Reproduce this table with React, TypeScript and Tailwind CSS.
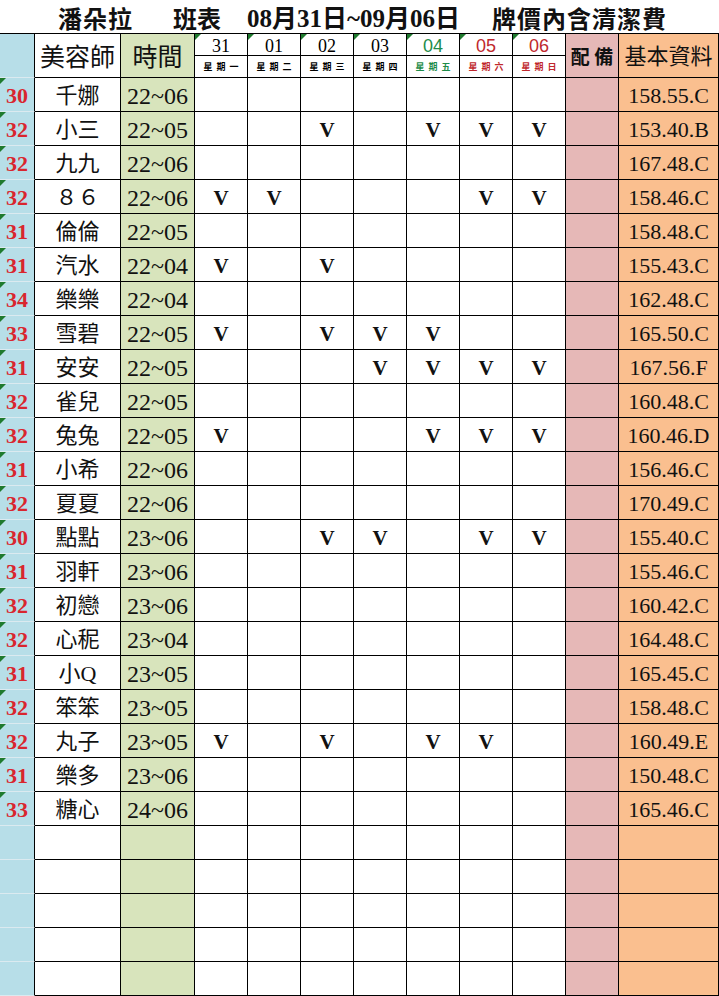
import React from "react";

type Row = {
  no: string;
  name: string;
  time: string;
  marks: number[];
  info: string;
};

const rows: Row[] = [
  { no: "30", name: "千娜", time: "22~06", marks: [], info: "158.55.C" },
  { no: "32", name: "小三", time: "22~05", marks: [2, 4, 5, 6], info: "153.40.B" },
  { no: "32", name: "九九", time: "22~06", marks: [], info: "167.48.C" },
  { no: "32", name: "８６", time: "22~06", marks: [0, 1, 5, 6], info: "158.46.C" },
  { no: "31", name: "倫倫", time: "22~05", marks: [], info: "158.48.C" },
  { no: "31", name: "汽水", time: "22~04", marks: [0, 2], info: "155.43.C" },
  { no: "34", name: "樂樂", time: "22~04", marks: [], info: "162.48.C" },
  { no: "33", name: "雪碧", time: "22~05", marks: [0, 2, 3, 4], info: "165.50.C" },
  { no: "31", name: "安安", time: "22~05", marks: [3, 4, 5, 6], info: "167.56.F" },
  { no: "32", name: "雀兒", time: "22~05", marks: [], info: "160.48.C" },
  { no: "32", name: "兔兔", time: "22~05", marks: [0, 4, 5, 6], info: "160.46.D" },
  { no: "31", name: "小希", time: "22~06", marks: [], info: "156.46.C" },
  { no: "32", name: "夏夏", time: "22~06", marks: [], info: "170.49.C" },
  { no: "30", name: "點點", time: "23~06", marks: [2, 3, 5, 6], info: "155.40.C" },
  { no: "31", name: "羽軒", time: "23~06", marks: [], info: "155.46.C" },
  { no: "32", name: "初戀", time: "23~06", marks: [], info: "160.42.C" },
  { no: "32", name: "心秜", time: "23~04", marks: [], info: "164.48.C" },
  { no: "31", name: "小Q", time: "23~05", marks: [], info: "165.45.C" },
  { no: "32", name: "笨笨", time: "23~05", marks: [], info: "158.48.C" },
  { no: "32", name: "丸子", time: "23~05", marks: [0, 2, 4, 5], info: "160.49.E" },
  { no: "31", name: "樂多", time: "23~06", marks: [], info: "150.48.C" },
  { no: "33", name: "糖心", time: "24~06", marks: [], info: "165.46.C" },
];

const days = [
  { d: "31", w: "星期一", c: "text-black", f: "font-['Liberation_Serif']" },
  { d: "01", w: "星期二", c: "text-black", f: "font-['Liberation_Serif']" },
  { d: "02", w: "星期三", c: "text-black", f: "font-['Liberation_Serif']" },
  { d: "03", w: "星期四", c: "text-black", f: "font-['Liberation_Serif']" },
  { d: "04", w: "星期五", c: "text-[#1e8c4a]", f: "font-['Liberation_Sans']" },
  { d: "05", w: "星期六", c: "text-[#c0282d]", f: "font-['Liberation_Sans']" },
  { d: "06", w: "星期日", c: "text-[#c0282d]", f: "font-['Liberation_Sans']" },
];

const grid = "grid grid-cols-[35px_86px_74px_repeat(7,53px)_53px_100px]";
const serif = "font-['Liberation_Serif','Noto_Sans_CJK_TC',serif]";

function Flag() {
  return (
    <span className="absolute left-0 top-0 h-0 w-0 border-t-[6px] border-r-[6px] border-t-[#1f7a2e] border-r-transparent" />
  );
}

export default function App() {
  const blanks = Array.from({ length: 5 });
  return (
    <div className={`w-[719px] h-[996px] overflow-hidden bg-white text-[#111] ${serif}`}>
      <div className="flex h-[34px] items-center border-b border-black pl-[58px] pt-[3px] text-[24px] font-bold font-['Noto_Sans_CJK_TC',serif] leading-none">
        <span className="tracking-[1px]">潘朵拉</span>
        <span className="ml-[40px]">班表</span>
        <span className="ml-[26px] font-['Liberation_Serif','Noto_Sans_CJK_TC',serif] text-[25px]">
          08月31日~09月06日
        </span>
        <span className="ml-[32px] tracking-[1px]">牌價內含清潔費</span>
      </div>

      <div className={`${grid} h-[44px]`}>
        <div className="border-b border-r border-b-[#dbeaf0] border-r-black bg-[#b7dee8]" />
        <div className="flex items-center justify-center border-b border-r border-black pt-[3px] text-[25px] leading-none">
          美容師
        </div>
        <div className="flex items-center justify-center border-b border-r border-black bg-[#d8e4bc] pt-[3px] text-[25px] leading-none">
          時間
        </div>
        {days.map((d) => (
          <div key={d.d} className={`relative flex flex-col border-b border-r border-black ${d.c}`}>
            <Flag />
            <div className={`flex h-[22px] items-center justify-center border-b border-black pt-[2px] text-[18px] leading-none ${d.f}`}>
              {d.d}
            </div>
            <div className="flex flex-1 items-center justify-center pl-[4px] text-[9px] font-bold tracking-[4px] font-['Noto_Sans_CJK_TC',serif]">
              {d.w}
            </div>
          </div>
        ))}
        <div className="flex items-center justify-center border-b border-r border-black bg-[#e6b8b7] text-[19px] font-bold leading-none font-['Noto_Sans_CJK_TC',serif]">
          配&nbsp;備
        </div>
        <div className="flex items-center justify-center border-b border-r border-black bg-[#fabf8f] pt-[3px] text-[22px] leading-none">
          基本資料
        </div>
      </div>

      {rows.map((r, i) => (
        <div key={i} className={`${grid} h-[34px]`}>
          <div className="relative flex items-center justify-center border-b border-r border-b-[#dbeaf0] border-r-black bg-[#b7dee8] pt-[3px] text-[22px] font-bold leading-none text-[#d9262e]">
            <Flag />
            {r.no}
          </div>
          <div className="flex items-center justify-center border-b border-r border-black pt-[3px] text-[22px] leading-none">
            {r.name}
          </div>
          <div className="flex items-center justify-center border-b border-r border-black bg-[#d8e4bc] pt-[3px] text-[24px] leading-none">
            {r.time}
          </div>
          {days.map((d, j) => (
            <div key={d.d} className="flex items-center justify-center border-b border-r border-black pt-[3px] text-[21px] font-bold leading-none">
              {r.marks.includes(j) ? "V" : ""}
            </div>
          ))}
          <div className="border-b border-r border-black bg-[#e6b8b7]" />
          <div className="flex items-center justify-center border-b border-r border-black bg-[#fabf8f] pt-[3px] text-[22px] leading-none">
            {r.info}
          </div>
        </div>
      ))}

      {blanks.map((_, i) => (
        <div key={`b${i}`} className={`${grid} h-[34px]`}>
          <div className="border-b border-r border-b-[#dbeaf0] border-r-black bg-[#b7dee8]" />
          <div className="border-b border-r border-black" />
          <div className="border-b border-r border-black bg-[#d8e4bc]" />
          {days.map((d) => (
            <div key={d.d} className="border-b border-r border-black" />
          ))}
          <div className="border-b border-r border-black bg-[#e6b8b7]" />
          <div className="border-b border-r border-black bg-[#fabf8f]" />
        </div>
      ))}
    </div>
  );
}
